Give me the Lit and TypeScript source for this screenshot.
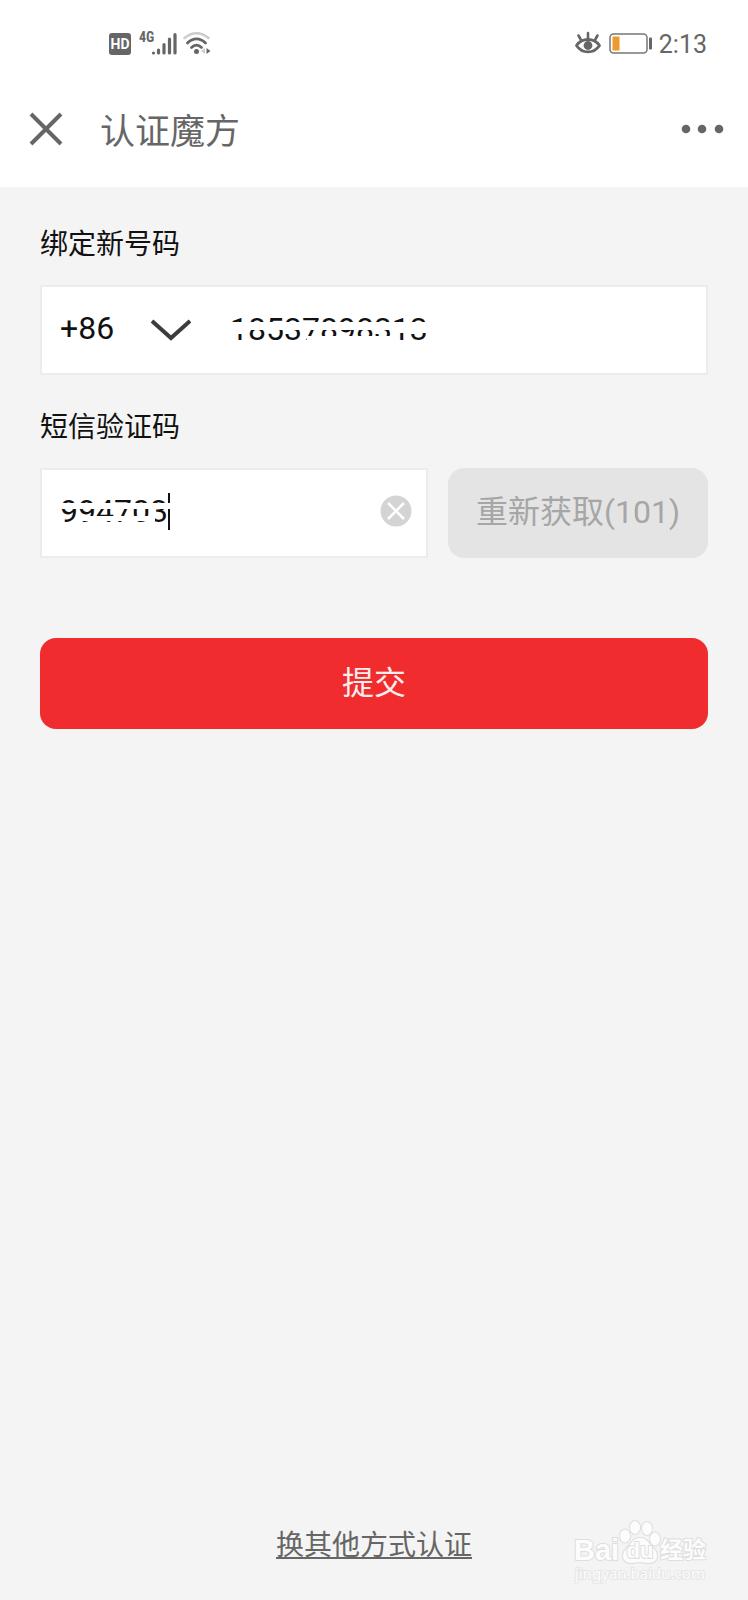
import { LitElement, html, css } from "lit";
import { customElement, state } from "lit/decorators.js";

@customElement("status-bar")
class StatusBar extends LitElement {
  static styles = css`
    :host {
      display: flex;
      align-items: center;
      justify-content: space-between;
      height: 87px;
      padding: 0 41px 0 108px;
      color: #666;
    }
    .group {
      display: flex;
      align-items: center;
    }
    .network {
      gap: 8px;
    }
    .system {
      gap: 7px;
    }
    .time {
      font: 25px/32px Roboto, sans-serif;
      padding-top: 2px;
    }
    svg {
      display: block;
      overflow: visible;
    }
    .hd {
      font: bold 14px Roboto, sans-serif;
    }
    .gen {
      font: bold 14px "Roboto Condensed", "Liberation Sans Narrow", Roboto, sans-serif;
    }
  `;

  render() {
    return html`
      <div class="group network">
        <svg width="23" height="22" viewBox="0 0 23 22" aria-label="HD">
          <rect x="1" y="0" width="22" height="22" rx="3" fill="#666" />
          <text class="hd" x="12" y="16" text-anchor="middle" fill="#fff">HD</text>
        </svg>
        <svg width="38" height="32" viewBox="0 -3 38 32" aria-label="4G">
          <text class="gen" x="0" y="11" fill="#666">4G</text>
          <g stroke="#666" stroke-width="3.200" stroke-linecap="round">
            <path d="M14.500 22v0M19.500 19v3M25 13.500v8.500M30.500 8v14M36 3.500v18.500" />
          </g>
        </svg>
        <svg width="28" height="26" viewBox="0 0 28 26" fill="none" stroke-linecap="round" aria-label="Wi-Fi">
          <path d="M-0.500 7C7 0.500 16 0.500 23.500 7" stroke="#ccc" stroke-width="2.500" />
          <path d="M2.500 12C8 6.500 15 6.500 20.500 12" stroke="#666" stroke-width="2.800" />
          <path d="M6.500 16.500c3-3 7-3 10 0" stroke="#666" stroke-width="2.800" />
          <circle cx="11.500" cy="20.500" r="2.500" fill="#666" />
          <path d="M20 17v6l-4-3z" fill="#ccc" />
          <path d="M21.500 17v6l4-3z" fill="#666" />
        </svg>
      </div>
      <div class="group system">
        <svg width="26" height="24" viewBox="0 0 26 24" fill="none" stroke="#666" aria-label="护眼">
          <path d="M1.500 13.500C7 5.500 19 5.500 24.500 13.500 19 22 7 22 1.500 13.500z" stroke-width="2.800" stroke-linejoin="round" />
          <circle cx="13" cy="13.500" r="4.400" fill="#666" stroke="none" />
          <path d="M13 6.500V1M6 8 3.500 3.500M20 8l2.500-4.500" stroke-width="2.600" stroke-linecap="round" />
        </svg>
        <svg width="44" height="22" viewBox="0 0 44 22" aria-label="电量">
          <rect x="2" y="1" width="37" height="19" rx="3.500" fill="#fff" stroke="#777" stroke-width="1.500" />
          <rect x="4.500" y="3.500" width="7" height="14" fill="#ee9a2c" />
          <rect x="41" y="4.500" width="3" height="12" rx="1" fill="#666" />
        </svg>
        <span class="time">2:13</span>
      </div>
    `;
  }
}

@customElement("brand-watermark")
class BrandWatermark extends LitElement {
  static styles = css`
    :host {
      display: block;
    }
    svg {
      display: block;
    }
    .mark {
      fill: #fcfcfc;
      stroke: #dedede;
      stroke-width: 2px;
      paint-order: stroke;
    }
    .latin {
      font: bold 29px "Liberation Sans", sans-serif;
    }
    .du {
      font: bold 22px "Liberation Sans", sans-serif;
    }
    .cjk {
      font: bold 23px "Noto Sans CJK SC", sans-serif;
    }
    .url {
      font: 15px "Noto Sans", sans-serif;
      stroke: #e6e6e6;
    }
  `;

  render() {
    return html`
      <svg width="136" height="68" viewBox="0 0 136 68" aria-hidden="true">
        <text class="mark latin" x="0" y="40">Bai</text>
        <g class="mark">
          <ellipse cx="51" cy="16" rx="5" ry="6.500" />
          <ellipse cx="61" cy="7.500" rx="5" ry="6.500" />
          <ellipse cx="73" cy="8.500" rx="5" ry="6.500" />
          <ellipse cx="81" cy="19" rx="5" ry="6.500" />
          <path d="M66 18c7 0 9 6 14 11 5 5 4 14-5 14-4 0-6-1-9-1s-5 1-9 1c-9 0-10-9-5-14 5-5 7-11 14-11z" />
        </g>
        <text class="mark du" x="66" y="38" text-anchor="middle">du</text>
        <text class="mark cjk" x="86" y="38">经验</text>
        <text class="mark url" x="1" y="59">jingyan.baidu.com</text>
      </svg>
    `;
  }
}

@customElement("app-root")
class AppRoot extends LitElement {
  static styles = css`
    :host {
      display: flex;
      flex-direction: column;
      min-height: 100vh;
      position: relative;
      background: #f4f4f4;
      color: #111;
      font-family: Roboto, "Noto Sans CJK SC", sans-serif;
    }
    * {
      box-sizing: border-box;
    }
    svg {
      display: block;
    }
    button,
    input,
    select {
      margin: 0;
      padding: 0;
      border: 0;
      border-radius: 0;
      background: none;
      color: inherit;
      font-family: inherit;
      font-size: 32px;
      outline: none;
      appearance: none;
    }
    header {
      background: #fff;
      color: #666;
      padding-bottom: 16px;
    }
    nav {
      display: flex;
      align-items: center;
      height: 84px;
      padding: 0 24px 0 28px;
    }
    h1 {
      flex: 1;
      margin: 0 0 0 36px;
      padding-top: 8px;
      font-size: 35px;
      line-height: 48px;
      font-weight: 400;
    }
    form {
      display: flex;
      flex-direction: column;
      padding: 40px 40px 0;
    }
    .label {
      font-size: 28px;
      line-height: 36px;
      margin-bottom: 22px;
    }
    .field {
      position: relative;
      display: flex;
      align-items: center;
      height: 90px;
      border: 2px solid #ececec;
      background: #fff;
      padding: 0 14px 4px 18px;
    }
    .phone {
      margin-bottom: 35px;
    }
    .area {
      display: grid;
      align-items: center;
      width: 131px;
      margin-right: 39px;
    }
    .area > * {
      grid-area: 1 / 1;
    }
    .area svg {
      justify-self: end;
      pointer-events: none;
    }
    .input {
      flex: 1;
      min-width: 0;
      height: 48px;
    }
    .phone .input {
      padding-top: 2px;
    }
    .row {
      display: flex;
      gap: 20px;
      margin-bottom: 80px;
    }
    .code {
      flex: 1;
      min-width: 0;
    }
    .redact {
      position: absolute;
      left: 0;
      top: 0;
      pointer-events: none;
    }
    .resend,
    .submit {
      border-radius: 16px;
      padding-bottom: 8px;
    }
    .resend {
      width: 260px;
      background: #e4e4e4;
      color: #a6a6a6;
    }
    .submit {
      height: 91px;
      background: #f02c2f;
      color: #fdeeee;
    }
    footer {
      margin-top: auto;
      padding-bottom: 34px;
      text-align: center;
    }
    .other {
      color: #666;
      font-size: 28px;
      line-height: 40px;
      text-decoration-thickness: 2px;
      text-underline-offset: 2px;
    }
    brand-watermark {
      position: absolute;
      right: 38px;
      bottom: 12px;
    }
  `;

  @state() private phone = "18537898313";
  @state() private code = "994703";

  private onPhone(e: Event) {
    this.phone = (e.target as HTMLInputElement).value;
  }

  private onCode(e: Event) {
    this.code = (e.target as HTMLInputElement).value;
  }

  private clearCode() {
    this.code = "";
  }

  render() {
    return html`
      <header>
        <status-bar></status-bar>
        <nav>
          <button type="button" aria-label="关闭">
            <svg width="36" height="36" viewBox="0 0 36 36" stroke="#666" stroke-width="4">
              <path d="M3 3 33 33M33 3 3 33" />
            </svg>
          </button>
          <h1>认证魔方</h1>
          <button type="button" aria-label="更多">
            <svg width="44" height="12" viewBox="0 0 44 12" fill="#666">
              <circle cx="6" cy="6" r="4.300" />
              <circle cx="22" cy="6" r="4.300" />
              <circle cx="39" cy="6" r="4.300" />
            </svg>
          </button>
        </nav>
      </header>

      <form @submit=${(e: Event) => e.preventDefault()}>
        <label class="label" for="phone">绑定新号码</label>
        <div class="field phone">
          <div class="area">
            <select aria-label="国家代码">
              <option>+86</option>
            </select>
            <svg width="42" height="28" viewBox="0 0 42 28" fill="none" stroke="#3c3c3c" stroke-width="4">
              <path d="M3 7 22 24 41 7" />
            </svg>
          </div>
          <input class="input" id="phone" type="tel" .value=${this.phone} @input=${this.onPhone} />
          <svg class="redact" width="400" height="86" viewBox="0 0 400 86" fill="#fff">
            <path d="M188 35H390V43H188z" />
            <path d="M188 42h16v5h-16zM265 49H348V60H265zM348 42H390V46H348z" />
          </svg>
        </div>

        <label class="label" for="code">短信验证码</label>
        <div class="row">
          <div class="field code">
            <input class="input" id="code" inputmode="numeric" .value=${this.code} @input=${this.onCode} />
            <button type="button" aria-label="清除" @click=${this.clearCode}>
              <svg width="32" height="32" viewBox="0 0 32 32">
                <circle cx="16" cy="16" r="15.500" fill="#d4d4d4" />
                <path d="M8 8 24 24M24 8 8 24" stroke="#fff" stroke-width="2.500" />
              </svg>
            </button>
            <svg class="redact" width="140" height="86" viewBox="0 0 140 86">
              <rect x="126" y="23" width="2" height="37" fill="#111" />
              <path d="M15 33H132V39H15zM38 46H113V51H38z" fill="#fff" />
            </svg>
          </div>
          <button class="resend" type="button" disabled>重新获取(101)</button>
        </div>

        <button class="submit" type="submit">提交</button>
      </form>

      <footer>
        <a class="other" href="#other">换其他方式认证</a>
      </footer>
      <brand-watermark></brand-watermark>
    `;
  }
}
